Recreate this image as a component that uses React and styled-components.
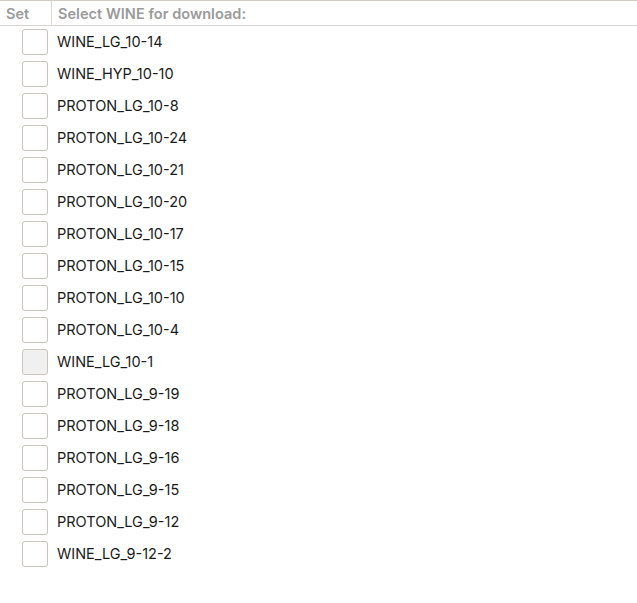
import React from 'react';
import styled, { createGlobalStyle } from 'styled-components';

const GlobalStyle = createGlobalStyle`
  html, body {
    margin: 0;
    padding: 0;
    background: #ffffff;
  }
  body {
    font-family: Inter, "Liberation Sans", sans-serif;
  }
`;

const versions = [
  'WINE_LG_10-14',
  'WINE_HYP_10-10',
  'PROTON_LG_10-8',
  'PROTON_LG_10-24',
  'PROTON_LG_10-21',
  'PROTON_LG_10-20',
  'PROTON_LG_10-17',
  'PROTON_LG_10-15',
  'PROTON_LG_10-10',
  'PROTON_LG_10-4',
  'WINE_LG_10-1',
  'PROTON_LG_9-19',
  'PROTON_LG_9-18',
  'PROTON_LG_9-16',
  'PROTON_LG_9-15',
  'PROTON_LG_9-12',
  'WINE_LG_9-12-2',
];

function App() {
  return (
    <>
      <GlobalStyle />
      <ListStyled>
        <div className="header">
          <div className="set">Set</div>
          <div className="title">Select WINE for download:</div>
        </div>
        <div className="rows">
          {versions.map((name) => (
            <Row key={name}>
              <Check hovered={name === 'WINE_LG_10-1'} />
              <span>{name}</span>
            </Row>
          ))}
        </div>
      </ListStyled>
    </>
  );
}

const ListStyled = styled.div`
  width: 637px;
  .header {
    display: flex;
    height: 24px;
    border-top: 1px solid #d3ccc6;
    border-bottom: 1px solid #d6d3d1;
    font-size: 14.5px;
    font-weight: 600;
    letter-spacing: 0.05px;
    color: #9a9a9a;
    .set {
      width: 52px;
      padding-left: 6px;
      box-sizing: border-box;
      border-right: 1px solid #dcd8d4;
      display: flex;
      align-items: center;
    }
    .title {
      padding-left: 6px;
      display: flex;
      align-items: center;
    }
  }
`;

const Row = styled.div`
  display: flex;
  align-items: flex-start;
  height: 32px;
  box-sizing: border-box;
  padding: 3px 0 0 22px;
  gap: 9px;
  font-size: 14.5px;
  line-height: 26px;
  color: #1a1a1a;
`;

const Check = styled.div`
  width: 24px;
  height: 24px;
  border: 1px solid #c9c3bd;
  border-radius: 3px;
  background: ${(p) => (p.hovered ? '#f0f0f0' : '#ffffff')};
`;

export default App;
